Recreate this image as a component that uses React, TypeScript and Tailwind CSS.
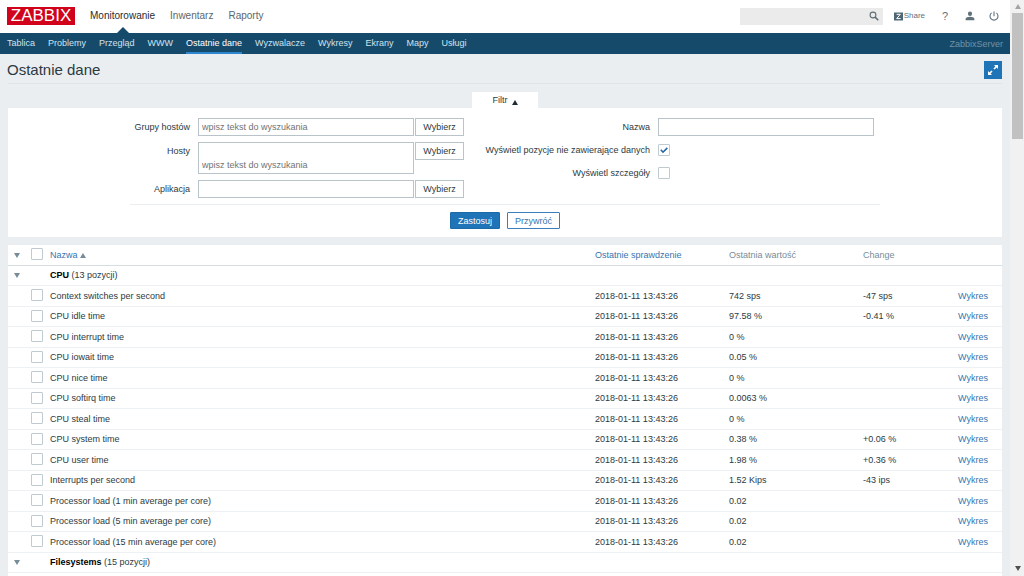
import React from 'react'

interface Item {
  name: string
  lastCheck: string
  value: string
  change?: string
}

interface Group {
  name: string
  count: number
  items: Item[]
}

const mainMenu = ['Monitorowanie', 'Inwentarz', 'Raporty']

const subMenu = ['Tablica', 'Problemy', 'Przegląd', 'WWW', 'Ostatnie dane', 'Wyzwalacze', 'Wykresy', 'Ekrany', 'Mapy', 'Usługi']

const lastCheck = '2018-01-11 13:43:26'

const groups: Group[] = [
  {
    name: 'CPU',
    count: 13,
    items: [
      { name: 'Context switches per second', lastCheck, value: '742 sps', change: '-47 sps' },
      { name: 'CPU idle time', lastCheck, value: '97.58 %', change: '-0.41 %' },
      { name: 'CPU interrupt time', lastCheck, value: '0 %' },
      { name: 'CPU iowait time', lastCheck, value: '0.05 %' },
      { name: 'CPU nice time', lastCheck, value: '0 %' },
      { name: 'CPU softirq time', lastCheck, value: '0.0063 %' },
      { name: 'CPU steal time', lastCheck, value: '0 %' },
      { name: 'CPU system time', lastCheck, value: '0.38 %', change: '+0.06 %' },
      { name: 'CPU user time', lastCheck, value: '1.98 %', change: '+0.36 %' },
      { name: 'Interrupts per second', lastCheck, value: '1.52 Kips', change: '-43 ips' },
      { name: 'Processor load (1 min average per core)', lastCheck, value: '0.02' },
      { name: 'Processor load (5 min average per core)', lastCheck, value: '0.02' },
      { name: 'Processor load (15 min average per core)', lastCheck, value: '0.02' },
    ],
  },
  {
    name: 'Filesystems',
    count: 15,
    items: [{ name: '', lastCheck: '', value: '' }],
  },
]

const Triangle: React.FC<{ up?: boolean; className?: string }> = ({ up, className = '' }) => (
  <svg viewBox="0 0 6 5" className={`inline-block h-[5px] w-[6px] fill-current ${className}`} aria-hidden="true">
    <path d={up ? 'M3 0L6 5H0Z' : 'M0 0H6L3 5Z'} />
  </svg>
)

const Checkbox: React.FC<{ id?: string; label?: string; checked?: boolean }> = ({ id, label, checked }) => (
  <span className="relative block size-3">
    <input
      id={id}
      type="checkbox"
      aria-label={label}
      defaultChecked={checked}
      className="peer block size-3 appearance-none rounded-[1px] border border-[#c0cad1] bg-white"
    />
    <svg viewBox="0 0 12 12" className="pointer-events-none absolute inset-0 hidden size-3 peer-checked:block" aria-hidden="true">
      <path d="M2.8 5.8L5 8.2L9.3 3.9" fill="none" stroke="#1f65a8" strokeWidth="1.6" />
    </svg>
  </span>
)

const Header = () => (
  <header className="flex h-[33px] items-center bg-white pr-[11px] pb-px pl-[7px]">
    <a href="#" className="flex h-[18px] w-[68px] items-center justify-center bg-[#d1021b] text-[17px] leading-[18px] text-white">
      ZABBIX
    </a>
    <nav className="ml-[15px] flex gap-[15px] self-stretch text-[10px]">
      {mainMenu.map((label, i) => (
        <a key={label} href="#" className={`relative flex items-center ${i === 0 ? 'text-[#1f2c33]' : 'text-[#5b666d]'}`}>
          {label}
          {i === 0 && (
            <svg viewBox="0 0 12 6" className="absolute top-[27px] left-1/2 h-[6px] w-3 -translate-x-1/2" aria-hidden="true">
              <path d="M6 0L12 6H0Z" fill="#164a6b" />
            </svg>
          )}
        </a>
      ))}
    </nav>
    <form className="ml-auto flex h-[17px] w-[143px] items-center bg-[#ebebeb] pr-1">
      <input type="text" aria-label="Szukaj" className="h-full min-w-0 flex-1 bg-transparent px-1 text-[9px] outline-none" />
      <button type="button" aria-label="Szukaj">
        <svg viewBox="0 0 10 10" className="size-[10px]" fill="none" stroke="#5f6d75" aria-hidden="true">
          <circle cx="4" cy="4" r="2.9" strokeWidth="1.1" />
          <path d="M6.1 6.1L9.3 9.3" strokeWidth="1.5" />
        </svg>
      </button>
    </form>
    <a href="#" className="ml-[11px] flex items-center gap-px text-[8px] text-[#60717c]">
      <svg viewBox="0 0 9 9" className="size-[9px]" aria-hidden="true">
        <path d="M0 .5H9V8.5H0Z" fill="#4f6675" />
        <path d="M2.6 2.3H6.3L2.7 6.6H6.6" fill="none" stroke="#fff" strokeWidth="1" />
      </svg>
      Share
    </a>
    <a href="#" aria-label="Pomoc" className="ml-4 w-2 text-center text-[11px] text-[#60717c]">?</a>
    <a href="#" aria-label="Profil" className="ml-4">
      <svg viewBox="0 0 10 10" className="size-[10px]" fill="#60717c" aria-hidden="true">
        <ellipse cx="5" cy="2.8" rx="2.1" ry="2.3" />
        <path d="M.6 9.3V8C.6 6.5 3 5.8 5 5.8S9.4 6.5 9.4 8V9.3Z" />
      </svg>
    </a>
    <a href="#" aria-label="Wyloguj" className="ml-[14px]">
      <svg viewBox="0 0 10 10" className="size-[10px]" fill="none" stroke="#60717c" strokeWidth="1.1" aria-hidden="true">
        <path d="M5 .6V5.2M2.6 1.9A4 4 0 1 0 7.4 1.9" />
      </svg>
    </a>
  </header>
)

const SubNav = () => (
  <nav className="flex h-[21px] items-stretch gap-[13px] bg-[#164a6b] px-[7px] text-[9px] text-[#d3e2eb]">
    {subMenu.map((label) => (
      <a
        key={label}
        href="#"
        className={`flex items-center border-b-2 ${label === 'Ostatnie dane' ? 'border-[#2f86d0] text-white' : 'border-transparent'}`}
      >
        {label}
      </a>
    ))}
    <span className="ml-auto self-center text-[#7391a4]">ZabbixServer</span>
  </nav>
)

const fieldClass = 'block w-[216px] rounded-none border border-[#b9c3ca] bg-white px-[3px] placeholder:text-[#737373] outline-none'

const SelectField: React.FC<{ id: string; label: string; placeholder?: string; tall?: boolean }> = ({ id, label, placeholder, tall }) => (
  <div className="flex items-start">
    <label htmlFor={id} className="mr-2 w-[60px] text-right leading-[18px] whitespace-nowrap">{label}</label>
    <input id={id} type="text" placeholder={placeholder} className={`${fieldClass} ${tall ? 'h-8 pt-[14px]' : 'h-[18px]'}`} />
    <button type="button" className="ml-px h-[18px] w-[49px] border border-[#b9c3ca] bg-white">Wybierz</button>
  </div>
)

const Filter = () => (
  <section className="mt-2 flex flex-col items-center">
    <button type="button" className="flex h-4 w-[66px] items-center justify-center gap-1 bg-white">
      Filtr <Triangle up className="mt-1 text-[#1f2c33]" />
    </button>
    <form className="flex w-full flex-col items-center bg-white pt-[10px] pb-2">
      <div className="flex w-[750px] max-w-full justify-between border-b border-[#eaeef0] pr-[6px] pb-[6px]">
        <div className="flex flex-col gap-[6px]">
          <SelectField id="groups" label="Grupy hostów" placeholder="wpisz tekst do wyszukania" />
          <SelectField id="hosts" label="Hosty" placeholder="wpisz tekst do wyszukania" tall />
          <SelectField id="application" label="Aplikacja" />
        </div>
        <div className="grid grid-cols-[auto_216px] content-start items-center gap-x-2 gap-y-[5px] text-right leading-[18px]">
          <label htmlFor="name">Nazwa</label>
          <input id="name" type="text" className={`${fieldClass} h-[18px]`} />
          <label htmlFor="without-data">Wyświetl pozycje nie zawierające danych</label>
          <Checkbox id="without-data" checked />
          <label htmlFor="details">Wyświetl szczegóły</label>
          <Checkbox id="details" />
        </div>
      </div>
      <div className="mt-[7px] flex gap-[7px]">
        <button type="button" className="h-[17px] w-[50px] rounded-[1px] border border-[#1a69a8] bg-[#1f73b7] text-white">Zastosuj</button>
        <button type="button" className="h-[17px] w-[53px] rounded-[1px] border border-[#3b7fba] bg-white text-[#3675b0]">Przywróć</button>
      </div>
    </form>
  </section>
)

const LatestData = () => (
  <table className="mt-2 w-full table-fixed border-collapse bg-white text-left whitespace-nowrap">
    <colgroup>
      <col className="w-[23px]" />
      <col className="w-[19px]" />
      <col />
      <col className="w-[134px]" />
      <col className="w-[134px]" />
      <col className="w-[95px]" />
      <col className="w-11" />
    </colgroup>
    <thead className="text-[#768d99]">
      <tr className="h-5 border-b border-[#d5dde1] [&>th]:p-0 [&>th]:font-normal">
        <th className="text-center"><Triangle className="ml-[-6px] align-middle" /></th>
        <th className="align-top"><div className="pt-[3px]"><Checkbox label="Zaznacz wszystko" /></div></th>
        <th><a href="#" className="text-[#3675b0]">Nazwa</a> <Triangle up /></th>
        <th><a href="#" className="text-[#3675b0]">Ostatnie sprawdzenie</a></th>
        <th>Ostatnia wartość</th>
        <th>Change</th>
        <th />
      </tr>
    </thead>
    <tbody>
      {groups.map((group) => (
        <React.Fragment key={group.name}>
          <tr className="h-5 border-b border-[#eef1f3] even:h-[21px] [&>td]:p-0">
            <td className="text-center text-[#768d99]"><Triangle className="ml-[-6px] align-middle" /></td>
            <td />
            <td colSpan={5}><b className="text-black">{group.name}</b> ({group.count} pozycji)</td>
          </tr>
          {group.items.map((item) => (
            <tr key={item.name} className="h-5 border-b border-[#eef1f3] even:h-[21px] [&>td]:p-0">
              <td />
              <td className="align-top"><div className="pt-[3px]"><Checkbox label={item.name} /></div></td>
              <td>{item.name}</td>
              <td>{item.lastCheck}</td>
              <td>{item.value}</td>
              <td>{item.change}</td>
              <td>{item.name && <a href="#" className="text-[#3675b0]">Wykres</a>}</td>
            </tr>
          ))}
        </React.Fragment>
      ))}
    </tbody>
  </table>
)

const ScrollBar = () => (
  <div className="flex w-[14px] shrink-0 flex-col items-center bg-[#f1f1f1] pr-px pl-[2px]" aria-hidden="true">
    <div className="flex h-[13px] items-center"><Triangle up className="text-[#a3a3a3]" /></div>
    <div className="h-[126px] w-full bg-[#c1c1c1]" />
    <div className="mt-auto flex h-[15px] items-center"><Triangle className="text-[#505050]" /></div>
  </div>
)

export default function App() {
  return (
    <div className="flex h-screen overflow-hidden bg-[#ebeef0] font-['Liberation_Sans',Arial,sans-serif] text-[9px] leading-3 text-[#2c3a42]">
      <div className="min-w-0 flex-1">
        <Header />
        <SubNav />
        <main className="px-2">
          <div className="flex h-[30px] items-center justify-between border-b border-[#dfe4e7]">
            <h1 className="-ml-px pt-[3px] text-[15px] leading-5">Ostatnie dane</h1>
            <button type="button" aria-label="Pełny ekran" className="mt-[3px] flex size-[18px] items-center justify-center bg-[#1f73b7]">
              <svg viewBox="0 0 12 12" className="size-3" aria-hidden="true">
                <path d="M7 1H11V5L9.6 3.6L7.6 5.6L6.4 4.4L8.4 2.4ZM5 11H1V7L2.4 8.4L4.4 6.4L5.6 7.6L3.6 9.6Z" fill="#fff" />
              </svg>
            </button>
          </div>
          <Filter />
          <LatestData />
        </main>
      </div>
      <ScrollBar />
    </div>
  )
}
